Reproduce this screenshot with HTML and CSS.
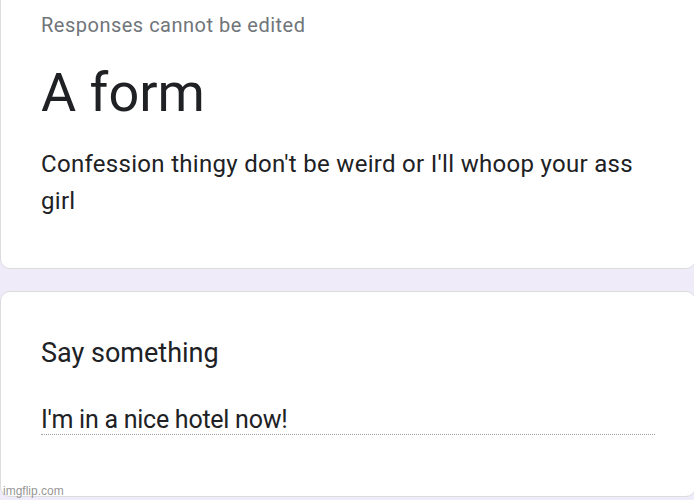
FILE: index.html
```html
<!DOCTYPE html>
<html lang="en">
<head>
    <meta charset="UTF-8">
    <meta name="viewport" content="width=device-width, initial-scale=1.0">
    <title>A form</title>
    <link rel="stylesheet" href="styles.css">
</head>
<body>
    <div class="form-page">
        <div class="card card-head">
            <div class="note">Responses cannot be edited</div>
            <h1 class="form-title">A form</h1>
            <p class="form-desc">Confession thingy don't be weird or I'll whoop your ass girl</p>
        </div>
        <div class="card card-question">
            <div class="question">Say something</div>
            <div class="answer">I'm in a nice hotel now!</div>
        </div>
    </div>
    <div class="watermark">imgflip.com</div>
</body>
</html>
```

FILE: styles.css
```css
/* Google Forms response view */
body {
    margin: 0;
    padding: 0;
    background-color: #f0ebf8;
    font-family: Roboto, "Liberation Sans", Arial, sans-serif;
    color: #202124;
    overflow: hidden;
    height: 500px;
}
.form-page {
    display: flex;
    flex-direction: column;
    gap: 22px;
    margin-right: -2px;
}
.card {
    background-color: #fff;
    border: 1px solid #dadce0;
    border-radius: 10px;
    padding: 0 40px;
}
.card-head {
    margin-top: -12px;
    padding-top: 24px;
    padding-bottom: 48px;
}
.note {
    font-size: 20px;
    line-height: 24px;
    letter-spacing: 0.5px;
    color: #70757a;
}
.form-title {
    margin: 24px 0 0 0;
    font-size: 54px;
    line-height: 64px;
    font-weight: 400;
}
.form-desc {
    margin: 21px 0 0 0;
    font-size: 24px;
    line-height: 37px;
    letter-spacing: 0.3px;
    color: #202124;
}
.card-question {
    padding-top: 45px;
    padding-bottom: 61px;
}
.question {
    font-size: 27px;
    line-height: 32px;
}
.answer {
    margin-top: 37px;
    font-size: 25px;
    line-height: 28px;
    letter-spacing: -0.25px;
    border-bottom: 1px dotted #9aa0a6;
}
.watermark {
    position: absolute;
    left: 3px;
    top: 484px;
    font-size: 12px;
    color: rgba(120, 120, 120, 0.8);
    font-family: "Liberation Sans", Arial, sans-serif;
}
```
